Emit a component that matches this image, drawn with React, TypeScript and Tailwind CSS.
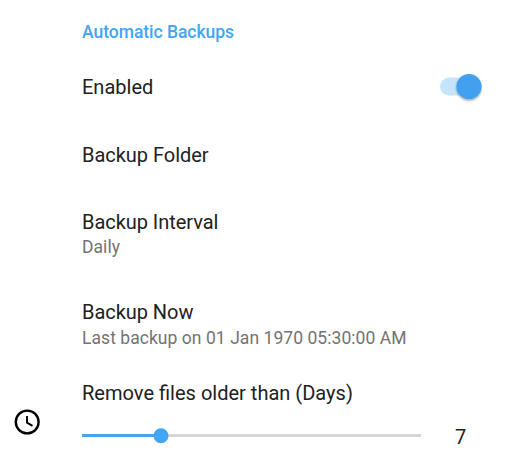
export default function App() {
  return (
    <main className="flex h-[468px] w-[505px] flex-col overflow-hidden bg-white pt-[20px] font-['Roboto',sans-serif] text-[20px] leading-6 text-[#212121]">
      <h2 className="ml-[82px] text-[17.5px] font-medium leading-6 tracking-[-0.03px] text-[#42a5f5]">Automatic Backups</h2>
      <div className="ml-[82px] mt-[31px] flex h-6 items-center justify-between pr-[23px]">
        <span>Enabled</span>
        <svg width="44" height="32" viewBox="0 0 44 32" className="shrink-0">
          <defs>
            <filter id="thumb-shadow" x="-30%" y="-30%" width="160%" height="160%">
              <feDropShadow dx="0" dy="1.3" stdDeviation="1" floodColor="#000" floodOpacity=".4" />
            </filter>
          </defs>
          <rect x="2" y="6.5" width="40" height="18" rx="9" fill="#c6e4fc" />
          <circle cx="31" cy="15.6" r="12.6" fill="#42a0ee" filter="url(#thumb-shadow)" />
        </svg>
      </div>
      <div className="ml-[82px] mt-[44px] h-6 tracking-[-0.03px]">Backup Folder</div>
      <div className="ml-[82px] mt-[43px] h-6 tracking-[-0.05px]">Backup Interval</div>
      <div className="ml-[82px] mt-px h-6 text-[17.5px] tracking-[0.05px] text-[#737373]">Daily</div>
      <div className="ml-[82px] mt-[41px] h-6 tracking-[-0.05px]">Backup Now</div>
      <div className="ml-[82px] mt-[2px] h-6 text-[17.5px] tracking-[0.05px] text-[#737373]">Last backup on 01 Jan 1970 05:30:00 AM</div>
      <div className="ml-[82px] mt-[31px] h-6 text-[20.05px]">Remove files older than (Days)</div>
      <div className="mt-[15px] flex h-[32px] items-center">
        <svg width="28" height="28" viewBox="0 0 28 28" fill="none" stroke="#000" className="-mt-7 ml-[13px] shrink-0">
          <circle cx="14.2" cy="14" r="11.4" strokeWidth="2.4" />
          <path d="M14 8v6.6l5.5 3.3" strokeWidth="1.9" />
        </svg>
        <svg width="339" height="18" viewBox="0 0 339 18" className="ml-[41px] shrink-0">
          <path d="M0 8.5h339" stroke="#d6d6d6" strokeWidth="3" />
          <path d="M0 8.5h79" stroke="#42a5f5" strokeWidth="3" />
          <circle cx="79" cy="8.7" r="7.5" fill="#42a5f5" />
        </svg>
        <span className="ml-[34px] mt-[2px]">7</span>
      </div>
    </main>
  );
}
